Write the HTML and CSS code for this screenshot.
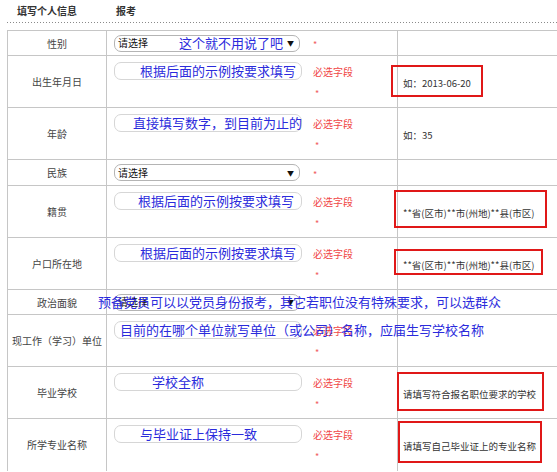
FILE: index.html
```html
<!DOCTYPE html>
<html lang="zh-CN">
<head>
<meta charset="utf-8">
<title>填写个人信息</title>
<link rel="stylesheet" href="styles.css">
</head>
<body>
<div class="page">
  <div class="head"><span class="h1">填写个人信息</span><span class="h2">报考</span></div>
  <table class="form">
    <colgroup><col class="c1"><col class="c2"><col class="c3"></colgroup>
    <tr class="single">
      <td class="label">性别</td>
      <td class="field"><div class="fld">
        <div class="box select"><span class="opt">请选择</span><span class="tip-sex">这个就不用说了吧</span><span class="arrow">▼</span></div>
        <span class="star">*</span>
      </div></td>
      <td class="note"></td>
    </tr>
    <tr class="double">
      <td class="label">出生年月日</td>
      <td class="field"><div class="fld">
        <div class="box in-a">根据后面的示例按要求填写</div>
        <div class="req"><span class="must">必选字段</span><span class="star">*</span></div>
      </div></td>
      <td class="note"><span class="mark m-birth"></span>如：2013-06-20</td>
    </tr>
    <tr class="double">
      <td class="label">年龄</td>
      <td class="field"><div class="fld">
        <div class="box in-b">直接填写数字，到目前为止的</div>
        <div class="req"><span class="must">必选字段</span><span class="star">*</span></div>
      </div></td>
      <td class="note">如：35</td>
    </tr>
    <tr class="single r-mid">
      <td class="label">民族</td>
      <td class="field"><div class="fld">
        <div class="box select"><span class="opt">请选择</span><span class="arrow">▼</span></div>
        <span class="star">*</span>
      </div></td>
      <td class="note"></td>
    </tr>
    <tr class="double">
      <td class="label">籍贯</td>
      <td class="field"><div class="fld">
        <div class="box in-c">根据后面的示例按要求填写</div>
        <div class="req"><span class="must">必选字段</span><span class="star">*</span></div>
      </div></td>
      <td class="note"><span class="mark m-native"></span>**省(区市)**市(州地)**县(市区)</td>
    </tr>
    <tr class="double">
      <td class="label">户口所在地</td>
      <td class="field"><div class="fld">
        <div class="box in-a">根据后面的示例按要求填写</div>
        <div class="req"><span class="must">必选字段</span><span class="star">*</span></div>
      </div></td>
      <td class="note"><span class="mark m-hukou"></span>**省(区市)**市(州地)**县(市区)</td>
    </tr>
    <tr class="single">
      <td class="label">政治面貌</td>
      <td class="field"><div class="fld">
        <div class="box select"><span class="opt">请选择</span><span class="arrow">▼</span></div>
      </div>
      <span class="over">预备党员可以以党员身份报考，其它若职位没有特殊要求，可以选群众</span></td>
      <td class="note"></td>
    </tr>
    <tr class="double">
      <td class="label">现工作（学习）单位</td>
      <td class="field"><div class="fld">
        <div class="box in-e"><span class="spill">目前的在哪个单位就写单位（或公司）名称，应届生写学校名称</span></div>
        <div class="req"><span class="must">必选字段</span><span class="star">*</span></div>
      </div></td>
      <td class="note"></td>
    </tr>
    <tr class="double">
      <td class="label">毕业学校</td>
      <td class="field"><div class="fld">
        <div class="box in-d">学校全称</div>
        <div class="req"><span class="must">必选字段</span><span class="star">*</span></div>
      </div></td>
      <td class="note"><span class="mark m-school"></span>请填写符合报名职位要求的学校</td>
    </tr>
    <tr class="double last">
      <td class="label">所学专业名称</td>
      <td class="field"><div class="fld">
        <div class="box in-a">与毕业证上保持一致</div>
        <div class="req"><span class="must">必选字段</span><span class="star">*</span></div>
      </div></td>
      <td class="note"><span class="mark m-major"></span>请填写自己毕业证上的专业名称</td>
    </tr>
  </table>
</div>
</body>
</html>
```
FILE: styles.css
```css
html, body {
  margin: 0;
  padding: 0;
  overflow: hidden;
  background: #fff;
}
body {
  font-family: "Noto Sans CJK SC", "Noto Sans", sans-serif;
  color: #333;
}
.page {
  padding-left: 7px;
}
.head {
  height: 23px;
  box-sizing: border-box;
  padding: 4px 0 0 10px;
  display: flex;
  font-size: 10px;
  line-height: 14px;
  font-weight: bold;
  color: #333;
  background-image: linear-gradient(to right, #8a8a8a 50%, transparent 50%);
  background-size: 3px 1px;
  background-repeat: repeat-x;
  background-position: left bottom;
}
.h1 {
  width: 99px;
}
.form {
  margin-top: 7px;
  border-collapse: collapse;
  table-layout: fixed;
  width: 562px;
}
.c1 { width: 99px; }
.c2 { width: 291px; }
.form td {
  border: 1px solid #c6c6c6;
  padding: 0;
}
.form tr.last td {
  border-bottom: none;
}
tr.single { height: 25px; }
tr.r-mid { height: 26px; }
tr.double { height: 52px; }

.label {
  text-align: center;
  vertical-align: middle;
  font-size: 10px;
  color: #444;
  white-space: nowrap;
}
.field {
  vertical-align: top;
  position: relative;
}
.fld {
  display: flex;
  align-items: flex-start;
  padding: 6px 0 0 7px;
}
.single .field {
  vertical-align: middle;
}
.single .fld {
  padding-top: 0;
  align-items: center;
}
.box {
  flex: none;
  width: 188px;
  height: 18px;
  box-sizing: border-box;
  border: 1px solid #d6d6d6;
  border-radius: 7px;
  display: flex;
  align-items: center;
  font-size: 13px;
  line-height: 16px;
  color: #2b2bdc;
  white-space: nowrap;
}
.select {
  height: 17px;
  width: 186px;
  border-color: #b4b4b4;
}
.opt {
  padding-left: 3px;
  font-size: 10px;
  color: #111;
}
.tip-sex {
  margin-left: 31px;
}
.arrow {
  margin-left: auto;
  padding-right: 5px;
  font-size: 7px;
  color: #111;
}
.in-a { padding-left: 25px; }
.in-b { padding-left: 18px; }
.in-c { padding-left: 23px; }
.in-d { padding-left: 37px; }
.in-e { padding-left: 5px; }
.spill {
  position: relative;
  z-index: 2;
}
.req {
  margin-left: 11px;
  display: flex;
  flex-direction: column;
  padding-top: 4px;
}
.must {
  font-size: 10px;
  line-height: 12px;
  color: #f04646;
}
.star {
  font-size: 9px;
  line-height: 10px;
  color: #f06060;
}
.req .star {
  margin-top: 11px;
  padding-left: 2px;
}
.fld > .star {
  margin-left: 13px;
  padding-top: 4px;
}
.over {
  position: absolute;
  left: -9px;
  top: 3px;
  z-index: 2;
  font-size: 13px;
  line-height: 18px;
  color: #2b2bdc;
  white-space: nowrap;
}
.form td.note {
  position: relative;
  vertical-align: middle;
  padding: 3px 0 0 5px;
  font-size: 9.5px;
  color: #333;
  white-space: nowrap;
}
.mark {
  position: absolute;
  border: 2px solid #e01818;
  box-sizing: border-box;
}
.m-birth { left: -7px; top: 9px; width: 92px; height: 32px; }
.m-native { left: -4px; top: 4px; width: 153px; height: 38px; }
.m-hukou { left: -4px; top: 11px; width: 149px; height: 26px; }
.m-school { left: -1px; top: 5px; width: 147px; height: 39px; }
.m-major { left: 0; top: 2px; width: 144px; height: 42px; }
```
